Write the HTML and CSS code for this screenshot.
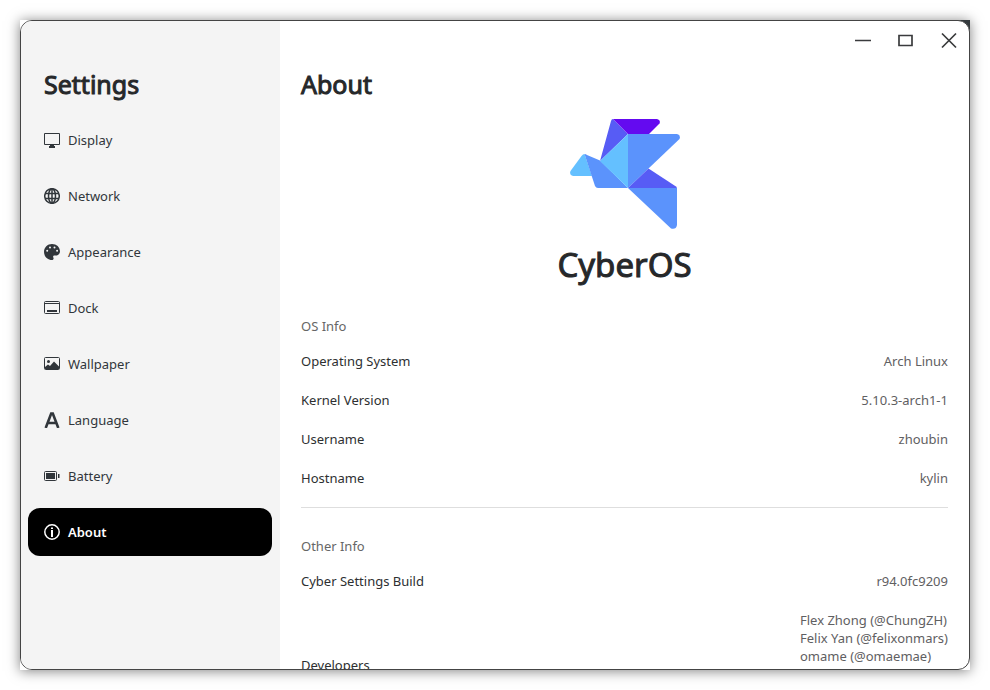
FILE: index.html
```html
<!DOCTYPE html>
<html lang="en">
<head>
<meta charset="utf-8">
<meta name="viewport" content="width=device-width, initial-scale=1">
<title>Settings</title>
<link rel="stylesheet" href="styles.css">
</head>
<body>
<div class="frame">
<div class="window">
  <aside class="sidebar">
    <h1 class="title sidebar-title">Settings</h1>
    <nav class="nav">
      <a class="nav-item" href="#display"><svg class="icon" viewBox="0 0 16 16"><path d="M.5 1.500h15v11H.5z" fill="none" stroke="currentColor"/><path d="M6 13h4v1h1v2H5v-2h1z"/></svg>Display</a>
      <a class="nav-item" href="#network"><svg class="icon" viewBox="0 0 16 16"><g fill="none" stroke="currentColor" stroke-width="1.500"><circle cx="8" cy="8" r="7.300"/><ellipse cx="8" cy="8" rx="3.500" ry="7.300"/><path d="M1 5.500h14M1 10.500h14M8 1v14"/></g></svg>Network</a>
      <a class="nav-item" href="#appearance"><svg class="icon" viewBox="0 0 16 16"><path fill-rule="evenodd" d="M8 0C3.500 0 0 3.500 0 8s3.500 8 8 8c1 0 1.600-.700 1.600-1.500 0-.800-.500-1-.500-1.700 0-.800.700-1.300 1.400-1.300H12c2.300 0 4-1.800 4-4C16 3 12.500 0 8 0zM3.200 5.700a1 1 0 1 1 0 2 1 1 0 0 1 0-2zM6 2.400a1 1 0 1 1 0 2 1 1 0 0 1 0-2zm4.500 0a1 1 0 1 1 0 2 1 1 0 0 1 0-2zm2.600 3.300a1 1 0 1 1 0 2 1 1 0 0 1 0-2z"/></svg>Appearance</a>
      <a class="nav-item" href="#dock"><svg class="icon" viewBox="0 0 16 16"><rect x=".5" y="1.500" width="15" height="12" rx="1" fill="none" stroke="currentColor"/><path d="M1 3h14v1H1zM3 10h10v2H3z"/></svg>Dock</a>
      <a class="nav-item" href="#wallpaper"><svg class="icon" viewBox="0 0 16 16"><rect x=".5" y="1.500" width="15" height="12" rx="1" fill="none" stroke="currentColor"/><circle cx="4.500" cy="5.500" r="1.500"/><path d="M1 11l3-2.500 2 1.500 4-4.500 5 5V13H1z"/></svg>Wallpaper</a>
      <a class="nav-item" href="#language"><svg class="icon" viewBox="0 0 16 16"><path d="M1.700 16L7.200 1.500h1.600L14.300 16M4 11h8" fill="none" stroke="currentColor" stroke-width="2.600"/></svg>Language</a>
      <a class="nav-item" href="#battery"><svg class="icon" viewBox="0 0 16 16"><rect x=".5" y="3.500" width="12" height="9" rx="1" fill="none" stroke="currentColor"/><path d="M2 5h9v6H2zM14 6h1.500v4H14z"/></svg>Battery</a>
      <a class="nav-item active" href="#about" aria-current="page"><svg class="icon" viewBox="0 0 16 16"><circle cx="8" cy="8" r="7.200" fill="none" stroke="currentColor" stroke-width="1.500"/><path d="M7 3.500h2V5H7zM7 6h2v7H7z"/></svg>About</a>
    </nav>
  </aside>
  <main class="content">
    <header class="titlebar">
      <button class="control" type="button" aria-label="Minimize"><svg viewBox="0 0 18 18"><path d="M1 9.500h16"/></svg></button>
      <button class="control" type="button" aria-label="Maximize"><svg viewBox="0 0 18 18"><path d="M2 4.500h13v10H2z"/></svg></button>
      <button class="control" type="button" aria-label="Close"><svg viewBox="0 0 18 18"><path d="M2 2.500l14 14M16 2.500l-14 14"/></svg></button>
    </header>
    <h2 class="title">About</h2>
    <section class="brand">
      <svg class="logo" viewBox="0 0 110 110" role="img" aria-label="Bird">
        <path fill="#64c0ff" d="M14.500 35L22 57H3Q-1 56 .5 52L11.500 37Q13 35 14.500 35z"/>
        <path fill="#5b93fc" d="M14.500 35Q16 35 17 36L30 41.500 58 69H28Q26 69 25 67z"/>
        <path fill="#575cf5" d="M43 0L58 15 30 42 41 2Q41.500 0 43 0z"/>
        <path fill="#640af0" d="M43 0H87Q91 1 89.500 4.500L79 15H58z"/>
        <path fill="#64c0ff" d="M58 15V69L30 42z"/>
        <path fill="#5b93fc" d="M58 15H107Q111 16 109.500 20L78.500 49.500 58 69z"/>
        <path fill="#575cf5" d="M78.500 49.500L106 67.500 107 69H58z"/>
        <path fill="#5b93fc" d="M58 69H107V106Q106 111 101 109.500z"/>
      </svg>
      <p class="brand-name">CyberOS</p>
    </section>
    <section class="info">
      <h3 class="info-title">OS Info</h3>
      <dl class="rows">
        <div class="row"><dt>Operating System</dt><dd>Arch Linux</dd></div>
        <div class="row"><dt>Kernel Version</dt><dd>5.10.3-arch1-1</dd></div>
        <div class="row"><dt>Username</dt><dd>zhoubin</dd></div>
        <div class="row"><dt>Hostname</dt><dd>kylin</dd></div>
      </dl>
    </section>
    <hr class="divider">
    <section class="info">
      <h3 class="info-title">Other Info</h3>
      <dl class="rows">
        <div class="row"><dt>Cyber Settings Build</dt><dd>r94.0fc9209</dd></div>
        <div class="row developers"><dt>Developers</dt><dd>Flex Zhong (@ChungZH)<br>Felix Yan (@felixonmars)<br>omame (@omaemae)</dd></div>
      </dl>
    </section>
  </main>
</div>
</div>
</body>
</html>
```
FILE: styles.css
```css
* { box-sizing: border-box; }

body {
  height: 100vh;
  margin: 0;
  padding: 20px;
  background: #fff;
  color: #2d2f31;
  font: 13px/18px "Noto Sans", sans-serif;
}

h1, h2, h3, p, dl, dd { margin: 0; }

.frame {
  height: 100%;
  background: linear-gradient(#343a3d, #343a3d) top right / 12px 12px no-repeat #fff;
  box-shadow: 0 1px 12px rgba(0, 0, 0, .5);
}

.window {
  display: flex;
  height: 100%;
  overflow: hidden;
  border: 1px solid #444;
  border-radius: 12px;
  background: #fff;
}

.sidebar {
  flex: none;
  width: 259px;
  padding: 43px 8px 0 7px;
  background: #f4f4f4;
}

.title,
.brand-name {
  font-weight: 400;
  color: #26282a;
  -webkit-text-stroke: 1px currentColor;
}

.title {
  font-size: 25px;
  line-height: 40px;
}

.sidebar-title { padding-left: 16px; }

.nav {
  display: flex;
  flex-direction: column;
  gap: 8px;
  margin-top: 12px;
}

.nav-item {
  display: flex;
  align-items: center;
  gap: 8px;
  height: 48px;
  padding: 0 16px;
  border-radius: 12px;
  color: #31363b;
  text-decoration: none;
}

.nav-item.active {
  background: #000;
  color: #fff;
  font-weight: 600;
}

.icon {
  flex: none;
  width: 16px;
  height: 16px;
  fill: currentColor;
}

.content {
  flex: 1;
  min-width: 0;
  padding: 0 21px;
}

.titlebar {
  display: flex;
  justify-content: flex-end;
  gap: 7px;
  height: 40px;
  margin-right: -19px;
}

.control {
  display: grid;
  place-items: center;
  width: 36px;
  height: 38px;
  padding: 0;
  border: 0;
  background: none;
}

.control svg {
  width: 18px;
  height: 18px;
  fill: none;
  stroke: #3a3b3d;
  stroke-width: 1.7;
}

.content .title { margin-top: 3px; }

.brand {
  display: flex;
  flex-direction: column;
  align-items: center;
  margin-top: 15px;
}

.logo {
  width: 110px;
  height: 110px;
}

.brand-name {
  margin-top: 12px;
  font-size: 33px;
  line-height: 48px;
}

.info-title {
  color: #666;
  font-size: 13px;
  font-weight: 400;
}

.brand + .info { margin-top: 28px; }

.rows {
  display: flex;
  flex-direction: column;
  gap: 21px;
  margin-top: 17px;
}

.row {
  display: flex;
  justify-content: space-between;
  align-items: center;
}

.row dd { color: #5f6062; }

.developers { min-height: 108px; }
.developers dd { align-self: flex-start; }

.divider {
  height: 1px;
  margin: 20px 0 29px;
  border: 0;
  background: #dedede;
}
```
